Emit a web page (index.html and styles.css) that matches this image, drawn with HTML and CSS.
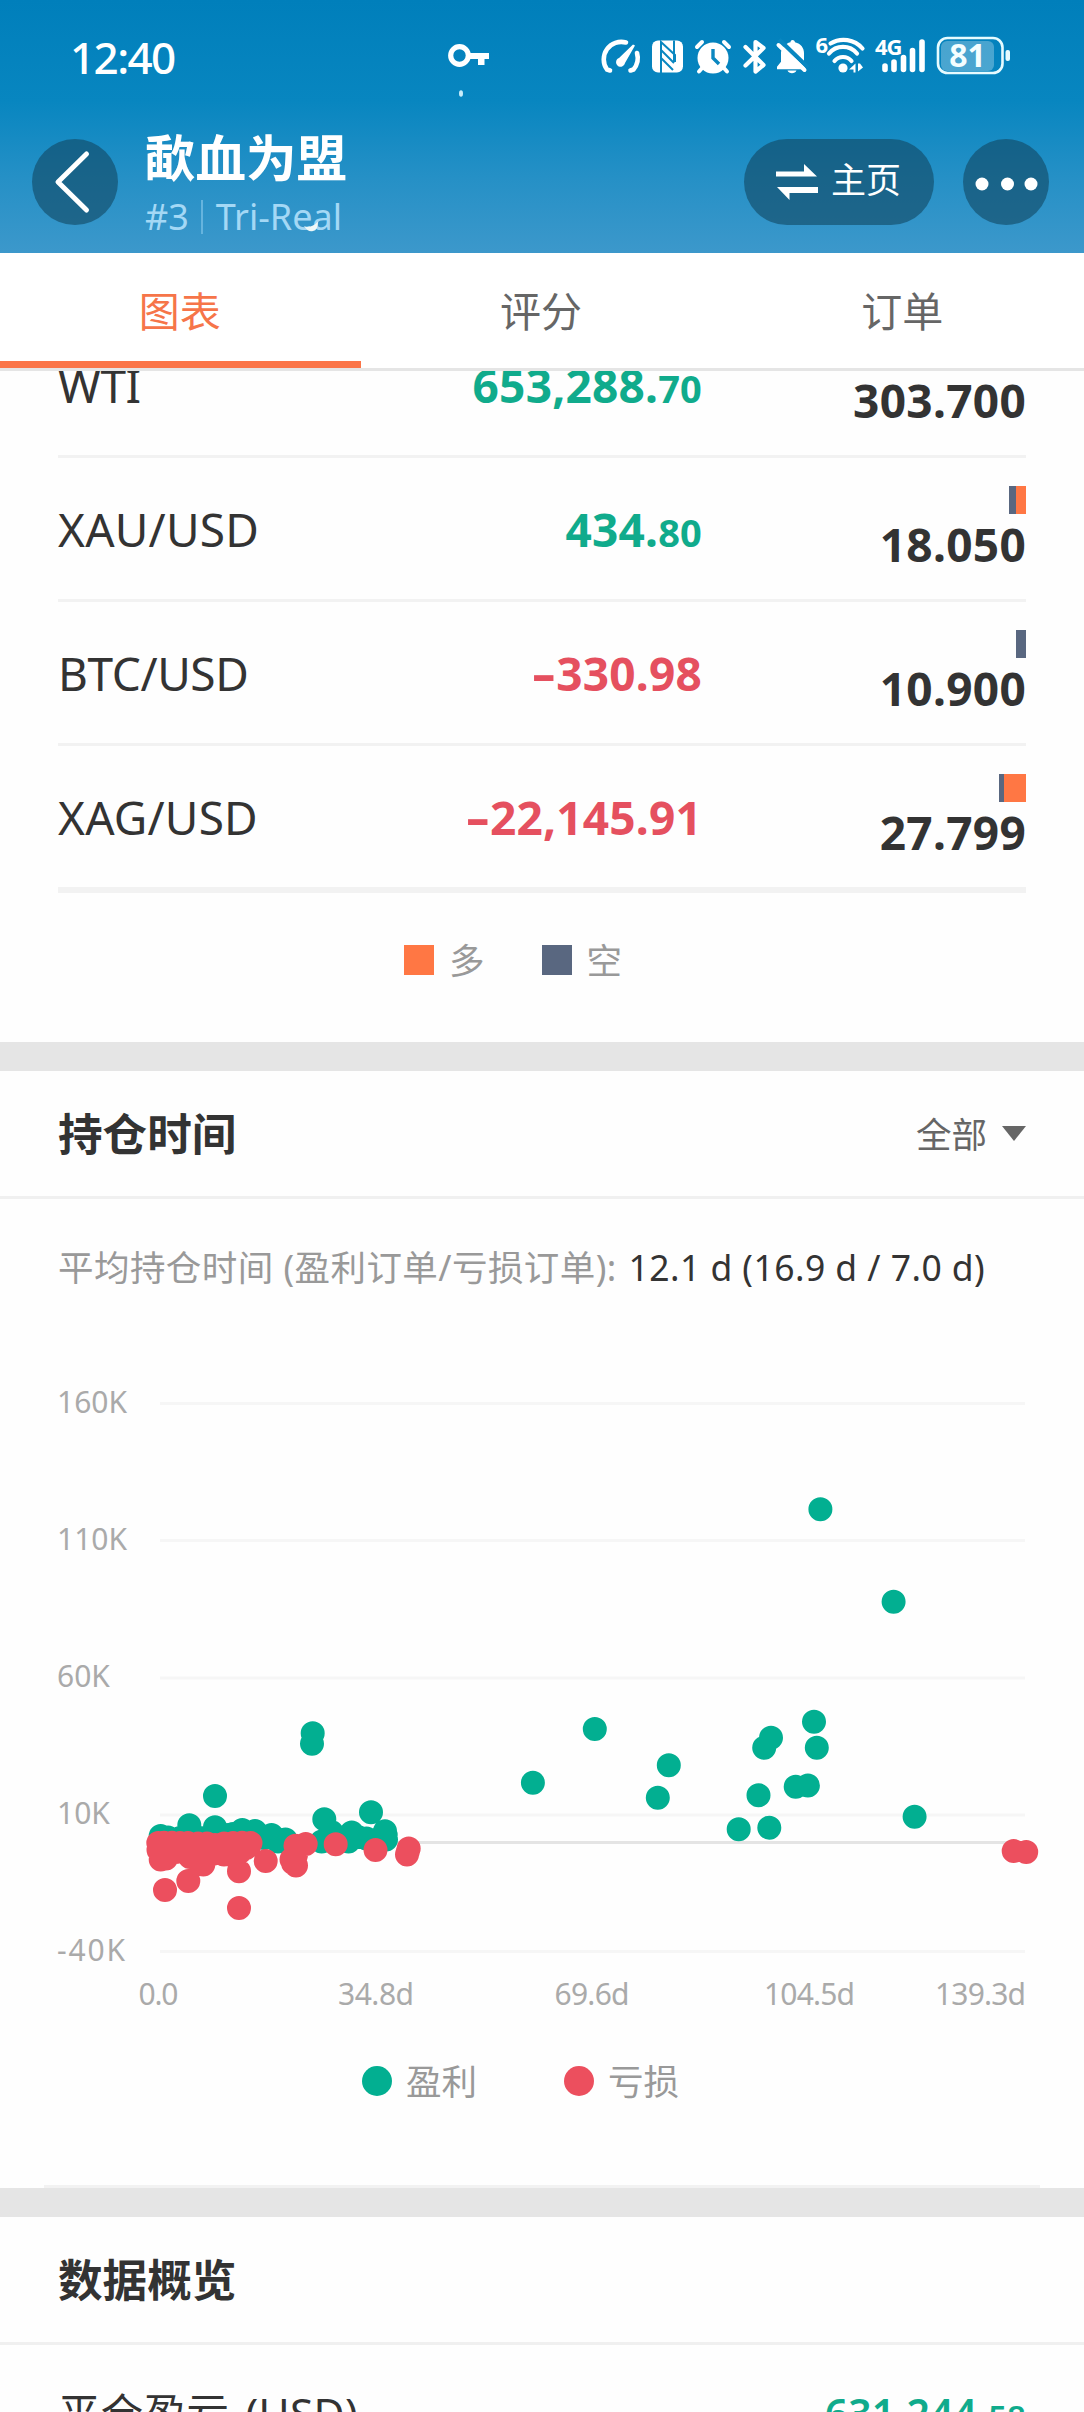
FILE: index.html
```html
<!DOCTYPE html>
<html lang="zh-CN">
<head>
<meta charset="utf-8">
<title>歃血为盟</title>
<link rel="stylesheet" href="styles.css">
</head>
<body>
<div class="screen">
  <header class="top">
    <div class="status">
      <span class="clock">12:40</span>
      <svg class="key" viewBox="448 44 42 26" width="42" height="26"><circle cx="459.500" cy="56.500" r="8.800" fill="none" stroke="#fff" stroke-width="5.200"/><path d="M468 54h21v6h-4.500v6h-6.500v-6h-10z" fill="#fff"/></svg>
      <div class="sys">
        <svg viewBox="600 34 46 44" width="46" height="44"><g fill="none" stroke="#fff" stroke-width="4.600" stroke-linecap="round"><path d="M610 70.500l-3-1A17.500 17.500 0 0 1 626 42.500"/><path d="M637 53a18 18 0 0 1-3.500 16.500l-3 1"/></g><path d="M633 44.500l2 1-10 17.500a4.500 4.500 0 1 1-6-5z" fill="#fff"/></svg>
        <svg viewBox="646 34 44 44" width="44" height="44"><rect x="652" y="40.500" width="31" height="32" rx="6" fill="#fff"/><g fill="none" stroke="#0a87c0" stroke-width="2"><path d="M661 73V42l14 13v7M661 50l13 13M661 58l12 12M674 40.500V62"/></g></svg>
        <svg viewBox="690 34 47 44" width="47" height="44"><circle cx="713" cy="58" r="15.500" fill="#fff"/><g stroke="#fff" stroke-width="4" stroke-linecap="round" fill="none"><path d="M697 47l5-5M729 47l-5-5M703 67l-4 4.500M723 67l4 4.500"/></g><path d="M713 49v9l6 6" fill="none" stroke="#0a87c0" stroke-width="3.400"/></svg>
        <svg viewBox="737 34 34 44" width="34" height="44"><path d="M745.500 47l18 18-8 6.500V42l8 6-18 17.500" fill="none" stroke="#fff" stroke-width="4.200" stroke-linejoin="round" stroke-linecap="round"/></svg>
        <svg viewBox="771 34 41 44" width="41" height="44"><path d="M783 47.500c2-3 5-5 7.500-5.300 0-3 4-3 4.500 0 6 1.300 9 6 9 11v11.500l1.500 4.500h-28.500v-2.500l4-5v-10zM787.500 70.500h9c-1.500 3.500-7.500 3.500-9 0z" fill="#fff"/><path d="M779 39.500l29 28" stroke="#0987c1" stroke-width="4.500"/><path d="M778.500 45l26 25" stroke="#fff" stroke-width="4" stroke-linecap="round"/></svg>
        <svg viewBox="812 34 58 44" width="58" height="44"><text x="815.500" y="53" class="net">6</text><g fill="none" stroke="#fff" stroke-width="4.200" stroke-linecap="round"><path d="M830.500 43.500a25 25 0 0 1 32 5M829 53.500a18 18 0 0 1 28 0M834.500 61a11 11 0 0 1 17 0"/></g><circle cx="843" cy="68" r="4.600" fill="#fff"/><path d="M849 69.500l6.500-6v9h-2v-3zM863 67.500l-5 4v-8h2z" fill="#fff"/></svg>
        <svg viewBox="870 34 62 44" width="62" height="44"><text x="875" y="55" class="net">4G</text><g stroke="#fff" stroke-width="5.600" stroke-linecap="round"><path d="M885 66v3.500M894 62v7.500M903.500 57.500v12M912.500 50.500v19M922 42v27.500"/></g></svg>
        <svg viewBox="932 34 82 44" width="82" height="44"><rect x="941" y="41" width="53" height="30" rx="6" fill="#fff" fill-opacity=".28"/><rect x="938" y="38" width="64.500" height="35" rx="9.500" fill="none" stroke="#e6fbff" stroke-width="2.600"/><rect x="1005.500" y="50" width="4.500" height="11" rx="2" fill="#e6fbff"/><text x="967.500" y="67" text-anchor="middle" class="batt">81</text></svg>
      </div>
    </div>
    <div class="bar">
      <span class="round"><svg viewBox="0 0 86 86" width="86" height="86"><path d="M54.500 15L26 43l28.500 28" fill="none" stroke="#fff" stroke-width="5" stroke-linecap="round" stroke-linejoin="round"/></svg></span>
      <div class="who">
        <h1>歃血为盟</h1>
        <p><span>#3</span><i></i><span class="acct">Tri-Real</span></p>
      </div>
      <span class="pill"><svg viewBox="0 0 42 36" width="42" height="36"><path d="M0 7.500h28V0l13 12.500H0zM42 29H13.500v7L1 23h41z" fill="#fff"/></svg><span class="home">主页</span></span>
      <span class="round"><svg viewBox="0 0 86 86" width="86" height="86" fill="#fff"><circle cx="19" cy="45" r="6.500"/><circle cx="44.500" cy="45" r="6.500"/><circle cx="68" cy="45" r="6.500"/></svg></span>
    </div>
    <svg class="birds" viewBox="0 0 1084 253" width="1084" height="253"><ellipse cx="461" cy="93.500" rx="2" ry="3.200" fill="#c9ecfa"/><path d="M304 226q7 3 14-4.500q0 9-5 9.500q-5 1.500-9-5z" fill="#f0f8f8"/></svg>
  </header>

  <nav class="tabs"><a class="on">图表</a><a>评分</a><a>订单</a></nav>

  <section class="symbols">
    <div class="row"><span class="name">WTI</span><span class="pl up">653,288.<small>70</small></span><span class="vol"><span class="bars"><i class="short w10"></i><i class="long w100"></i></span>303.700</span></div>
    <div class="row"><span class="name wide">XAU/USD</span><span class="pl up">434.<small>80</small></span><span class="vol"><span class="bars"><i class="short w7"></i><i class="long w10"></i></span>18.050</span></div>
    <div class="row"><span class="name">BTC/USD</span><span class="pl down"><span class="neg">-</span>330.98</span><span class="vol"><span class="bars"><i class="short w10"></i></span>10.900</span></div>
    <div class="row last"><span class="name wide">XAG/USD</span><span class="pl down"><span class="neg">-</span>22,145.91</span><span class="vol"><span class="bars"><i class="short w5"></i><i class="long w22"></i></span>27.799</span></div>
    <div class="legend sides"><span><i class="long"></i>多</span><span><i class="short"></i>空</span></div>
  </section>

  <section class="card hold">
    <div class="head"><h2>持仓时间</h2><span class="pick">全部<i></i></span></div>
    <p class="avg">平均持仓时间 (盈利订单/亏损订单): <b>12.1 d (16.9 d / 7.0 d)</b></p>
    <svg class="chart" viewBox="0 1370 1084 650" width="1084" height="650">
      <g class="grid"><path d="M160 1403.500H1025M160 1540.500H1025M160 1678H1025M160 1815H1025M160 1951.500H1025"/><path class="zero" d="M160 1842.500H1025"/></g>
      <g class="axis">
        <text x="57" y="1412.500">160K</text><text x="57" y="1549.500">110K</text><text x="57" y="1687">60K</text><text x="57" y="1824">10K</text><text x="57" y="1961" textLength="68">-40K</text>
        <text x="158.500" y="2005" text-anchor="middle" textLength="40">0.0</text><text x="376" y="2005" text-anchor="middle" textLength="76">34.8d</text><text x="592" y="2005" text-anchor="middle" textLength="75">69.6d</text><text x="809.500" y="2005" text-anchor="middle" textLength="91">104.5d</text><text x="1026" y="2005" text-anchor="end" textLength="91">139.3d</text>
      </g>
      <path class="dots win" d="M312.700 1733.300h0M312 1743.700h0M215 1796h0M189.300 1825.300h0M215 1827.300h0M324.300 1819.300h0M371 1812.300h0M160.700 1836h0M168 1837.500h0M180 1838h0M200 1838h0M228 1835h0M242.300 1830h0M255 1831h0M233 1834h0M271.500 1835h0M285.500 1839.500h0M278 1841.500h0M264 1838h0M321.700 1841.500h0M331.500 1832h0M336 1836h0M351.700 1832.500h0M348.500 1841.500h0M366.500 1838.500h0M385 1831.300h0M385.700 1835h0M386 1839.500h0M358 1837h0M340 1839h0M820.400 1509.300h0M893.600 1601.700h0M594.800 1729h0M532.900 1782.700h0M668.800 1765.300h0M657.800 1797.700h0M771 1737.700h0M764.200 1747.700h0M814 1721.700h0M816.800 1747.700h0M758.500 1795.300h0M795.700 1786.700h0M807.900 1785.500h0M914.600 1816.700h0M738.700 1829.300h0M769.300 1827.700h0"/>
      <path class="dots loss" d="M165 1890h0M188.300 1881h0M239 1908h0M239 1871.300h0M265.700 1861h0M296 1865.500h0M291.500 1859.500h0M293 1863h0M296 1855h0M295.500 1845.700h0M305.700 1844h0M335.700 1844.300h0M375.500 1850h0M408.700 1848.500h0M408 1851h0M407 1854.500h0M158.300 1843h0M164 1842.700h0M172 1842.700h0M180 1843h0M188 1843h0M198 1843.600h0M207 1843.600h0M215 1845h0M224 1843.600h0M233 1843h0M242 1842.700h0M250.500 1843h0M158.500 1850h0M160.700 1859.500h0M166 1858.500h0M176 1852h0M190 1857h0M197 1860h0M203.300 1864.500h0M212 1854h0M224 1854.500h0M232 1855h0M240 1852h0M246 1848h0M1013.700 1851h0M1026.200 1852h0"/>
    </svg>
    <div class="legend results"><span><i class="g"></i>盈利</span><span><i class="r"></i>亏损</span></div>
    <hr>
  </section>

  <section class="card">
    <div class="head"><h2>数据概览</h2></div>
    <div class="total"><span>平仓盈亏 (USD)</span><span class="pl up">631,244.<small>58</small></span></div>
  </section>
</div>
</body>
</html>
```
FILE: styles.css
```css
* { box-sizing: border-box; }
body, h1, h2, p { margin: 0; }
body { background: #fefefe; color: #333; font-family: "Noto Sans", "Noto Sans CJK SC", sans-serif; }
i { font-style: normal; display: block; }
svg { display: block; flex: none; overflow: visible; }
.screen { width: 1084px; height: 2412px; overflow: hidden; display: flex; flex-direction: column; }
.screen > * { flex: none; }

.top { position: relative; height: 253px; background: linear-gradient(#007fbb, #0886c0 40%, #2590c6 70%, #3c98cb); color: #fff; }
.status { display: flex; align-items: center; height: 139px; padding: 0 70px 27px 70px; }
.clock { font-size: 44px; font-weight: 500; line-height: 50px; width: 378px; letter-spacing: -1.6px; padding-top: 2px; }
.sys { display: flex; margin-left: 110px; }
.net { font: 700 22px "Noto Sans", sans-serif; fill: #fff; letter-spacing: -1px; }
.batt { font: 700 32px "Noto Sans", sans-serif; fill: #f4feff; }
.bar { display: flex; align-items: flex-start; padding: 0 35px 0 32px; }
.round { width: 86px; height: 86px; border-radius: 50%; background: rgba(18, 72, 100, .62); }
.who { width: 390px; margin: -11px 0 0 27px; }
.who h1 { font-size: 50.500px; line-height: 60px; }
.who p { display: flex; align-items: center; font-size: 36px; line-height: 48px; margin-top: 5px; color: #a4d8f5; }
.who p i { width: 2px; height: 34px; background: #66b4de; margin: 0 13px 0 12px; }
.pill { display: flex; align-items: center; gap: 13px; width: 190px; height: 86px; margin-left: 209px; margin-right: 29px; padding-left: 32px; border-radius: 43px; background: rgba(18, 72, 100, .62); font-size: 35px; }
.home { line-height: 40px; padding-bottom: 5px; }
.birds { position: absolute; left: 0; top: 0; }

.tabs { display: flex; height: 118px; border-bottom: 3px solid #e5e5e5; background: #fff; }
.tabs a { flex: 1; text-align: center; font-size: 41px; line-height: 116px; padding-right: 2px; color: #666; }
.tabs .on { color: #f67549; border-bottom: 7px solid #fb7548; }

.symbols { height: 671px; overflow: hidden; padding: 0 58px; }
.row { display: flex; align-items: center; height: 144px; border-bottom: 3px solid #f2f2f2; }
.row:first-child { margin-top: -57px; }
.last { height: 147px; border-bottom-width: 6px; }
.name { width: 300px; font-size: 46px; letter-spacing: -.4px; }
.wide { letter-spacing: .2px; }
.pl { font-size: 46px; font-weight: 700; text-align: right; letter-spacing: .2px; }
.row .pl { width: 344px; }
.pl small { font-size: 38px; }
.neg { display: inline-block; transform: scaleX(1.6); transform-origin: right; }
.up { color: #10ab8c; }
.down { color: #e5505f; }
.vol { flex: 1; align-self: flex-start; display: flex; flex-direction: column; gap: 10px; padding-top: 28px; text-align: right; font-size: 46px; line-height: 40px; font-weight: 700; letter-spacing: .3px; }
.bars { display: flex; justify-content: flex-end; height: 28px; }
.long { background: #ff7744; }
.short { background: #596780; }
.w5 { width: 5px; } .w7 { width: 7px; } .w10 { width: 10px; } .w22 { width: 22px; } .w100 { width: 100px; }

.legend { display: flex; align-items: center; font-size: 35.500px; line-height: 50px; color: #999; }
.legend span { display: flex; align-items: center; }
.legend i { width: 30px; height: 30px; }
.sides { padding: 42px 0 0 346px; gap: 57px; }
.sides i { margin-right: 15px; }

.card { border-top: 29px solid #e5e5e5; }
.head { display: flex; justify-content: space-between; align-items: center; height: 128px; padding: 0 58px; border-bottom: 3px solid #f0f0f0; }
h2 { font-size: 44.600px; line-height: 60px; padding-top: 1px; }
.pick { display: flex; align-items: center; font-size: 35.500px; line-height: 50px; color: #666; gap: 15px; }
.pick i { border: 12px solid transparent; border-top: 15px solid #666; border-bottom: 0; }
.hold { height: 1146px; }
.avg { padding: 43px 58px 0; font-size: 35.500px; line-height: 50px; color: #999; white-space: nowrap; letter-spacing: .45px; }
.avg b { font-weight: 400; color: #333; margin-left: 2px; }
.chart { margin-top: 78px; }
.grid { fill: none; stroke: #f6f6f6; stroke-width: 3; }
.zero { stroke: #e4e4e4; }
.axis { font-size: 30px; fill: #aaa; }
.dots { fill: none; stroke-width: 24; stroke-linecap: round; }
.win { stroke: #02af91; }
.loss { stroke: #ec4f5e; }
.results { padding: 36px 0 0 362px; gap: 87px; }
.results i { border-radius: 50%; margin-right: 14px; }
.g { background: #02af91; }
.r { background: #ec4f5e; }
hr { height: 3px; margin: 79px 44px 0; border: 0; background: #f2f2f2; }
.total { display: flex; justify-content: space-between; padding: 38px 58px 0; font-size: 42.500px; line-height: 60px; letter-spacing: .3px; word-spacing: 5px; }
.total .pl { font-size: 41px; font-weight: 600; letter-spacing: 0; }
.total small { font-size: 33px; }
```
